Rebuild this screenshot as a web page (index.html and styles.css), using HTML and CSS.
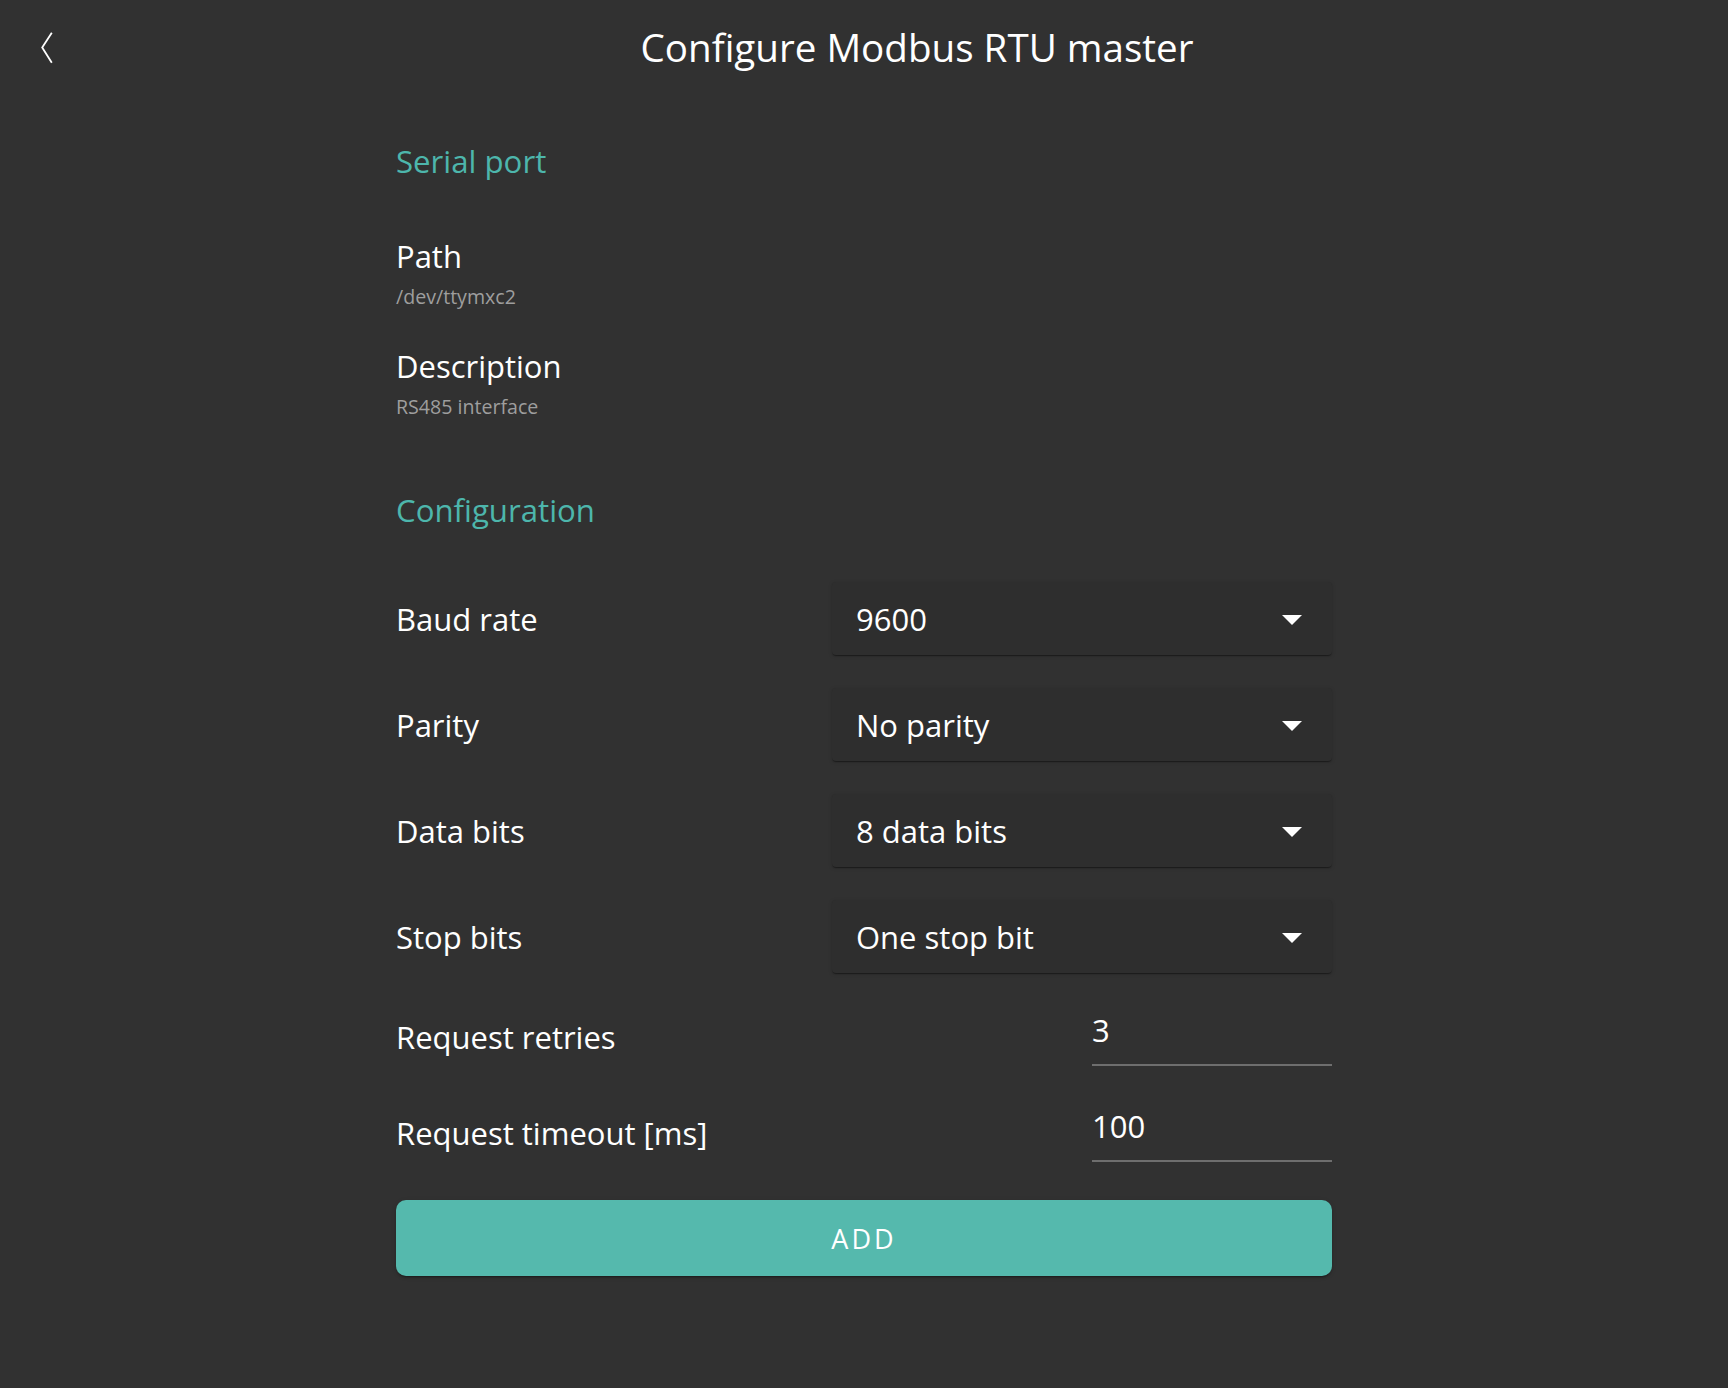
FILE: index.html
```html
<!DOCTYPE html>
<html lang="en">
<head>
<meta charset="utf-8">
<title>Configure Modbus RTU master</title>
<link rel="stylesheet" href="styles.css">
</head>
<body>
<header class="topbar">
  <div class="back">
    <svg class="chevron" width="12" height="32" viewBox="0 0 12 32" aria-hidden="true">
      <path d="M10.8 0.8 L1.2 15.5 L10.8 30.8" fill="none" stroke="#ffffff" stroke-width="1.8" stroke-linejoin="miter"/>
    </svg>
  </div>
  <h1 class="title">Configure Modbus RTU master</h1>
</header>

<main class="content">
  <h2 class="section first">Serial port</h2>

  <div class="info">
    <div class="info-label">Path</div>
    <div class="info-value">/dev/ttymxc2</div>
  </div>
  <div class="info second">
    <div class="info-label">Description</div>
    <div class="info-value">RS485 interface</div>
  </div>

  <h2 class="section config">Configuration</h2>

  <div class="rows">
    <div class="row">
      <div class="label">Baud rate</div>
      <div class="select"><span>9600</span><svg class="arrow" width="20" height="10" viewBox="0 0 20 10"><polygon points="0,0 20,0 10,10" fill="#fff"/></svg></div>
    </div>
    <div class="row">
      <div class="label">Parity</div>
      <div class="select"><span>No parity</span><svg class="arrow" width="20" height="10" viewBox="0 0 20 10"><polygon points="0,0 20,0 10,10" fill="#fff"/></svg></div>
    </div>
    <div class="row">
      <div class="label">Data bits</div>
      <div class="select"><span>8 data bits</span><svg class="arrow" width="20" height="10" viewBox="0 0 20 10"><polygon points="0,0 20,0 10,10" fill="#fff"/></svg></div>
    </div>
    <div class="row">
      <div class="label">Stop bits</div>
      <div class="select"><span>One stop bit</span><svg class="arrow" width="20" height="10" viewBox="0 0 20 10"><polygon points="0,0 20,0 10,10" fill="#fff"/></svg></div>
    </div>
  </div>

  <div class="inputs">
    <div class="irow">
      <div class="label">Request retries</div>
      <div class="field"><span class="fval">3</span></div>
    </div>
    <div class="irow">
      <div class="label">Request timeout [ms]</div>
      <div class="field"><span class="fval">100</span></div>
    </div>
  </div>

  <button class="add" type="button">ADD</button>
</main>
</body>
</html>
```

FILE: styles.css
```css
html, body {
  margin: 0;
  padding: 0;
}

body {
  background: #313131;
  color: #ffffff;
  font-family: "Open Sans", "Noto Sans", sans-serif;
  min-height: 1388px;
}

.topbar {
  display: flex;
  align-items: center;
  height: 94px;
}

.back {
  width: 106px;
  flex: 0 0 106px;
  display: flex;
  align-items: center;
  height: 100%;
}

.chevron {
  display: block;
  margin-left: 41px;
  margin-top: 2px;
}

.title {
  flex: 1;
  margin: 0;
  text-align: center;
  font-weight: 400;
  font-size: 38.6px;
  line-height: 52px;
  color: #ffffff;
}

.content {
  width: 936px;
  margin: 0 auto;
  display: flex;
  flex-direction: column;
}

.section {
  margin: 0;
  font-weight: 400;
  font-size: 31.2px;
  line-height: 40px;
  color: #4db6ac;
}

.section.first {
  margin-top: 47px;
}

.section.config {
  margin-top: 70px;
}

.info {
  margin-top: 55px;
}

.info.second {
  margin-top: 36px;
}

.info-label {
  font-size: 31px;
  line-height: 40px;
}

.info-value {
  margin-top: 8px;
  font-size: 19.6px;
  line-height: 26px;
  color: #9e9e9e;
}

.rows {
  margin-top: 52px;
  display: flex;
  flex-direction: column;
  gap: 33px;
}

.row {
  display: flex;
  align-items: center;
  justify-content: space-between;
}

.label {
  font-size: 31px;
  line-height: 40px;
}

.select {
  width: 500px;
  height: 73px;
  box-sizing: border-box;
  padding: 0 30px 0 24px;
  display: flex;
  align-items: center;
  justify-content: space-between;
  background: #2e2e2e;
  border-radius: 4px;
  box-shadow: 0 2px 1px -1px rgba(0, 0, 0, 0.25), 0 1px 1px 0 rgba(0, 0, 0, 0.16), 0 1px 4px 0 rgba(0, 0, 0, 0.14);
  font-size: 31px;
  line-height: 40px;
}

.arrow {
  display: block;
  margin-top: 2px;
}

.inputs {
  margin-top: 37px;
  display: flex;
  flex-direction: column;
  gap: 40px;
}

.irow {
  display: flex;
  align-items: center;
  justify-content: space-between;
}

.field {
  width: 240px;
  box-sizing: border-box;
  padding-bottom: 14px;
  border-bottom: 2px solid #6e6e6e;
}

.fval {
  display: block;
  font-size: 31px;
  line-height: 40px;
}

.irow .label {
  margin-bottom: 2px;
}

.add {
  margin-top: 38px;
  height: 76px;
  width: 100%;
  border: none;
  border-radius: 10px;
  background: #55b9ad;
  color: #ffffff;
  font-family: "Open Sans", "Noto Sans", sans-serif;
  font-size: 27px;
  font-weight: 400;
  letter-spacing: 3px;
  box-shadow: 0 3px 1px -2px rgba(0, 0, 0, 0.2), 0 2px 2px 0 rgba(0, 0, 0, 0.14), 0 1px 5px 0 rgba(0, 0, 0, 0.12);
  cursor: pointer;
}
```
